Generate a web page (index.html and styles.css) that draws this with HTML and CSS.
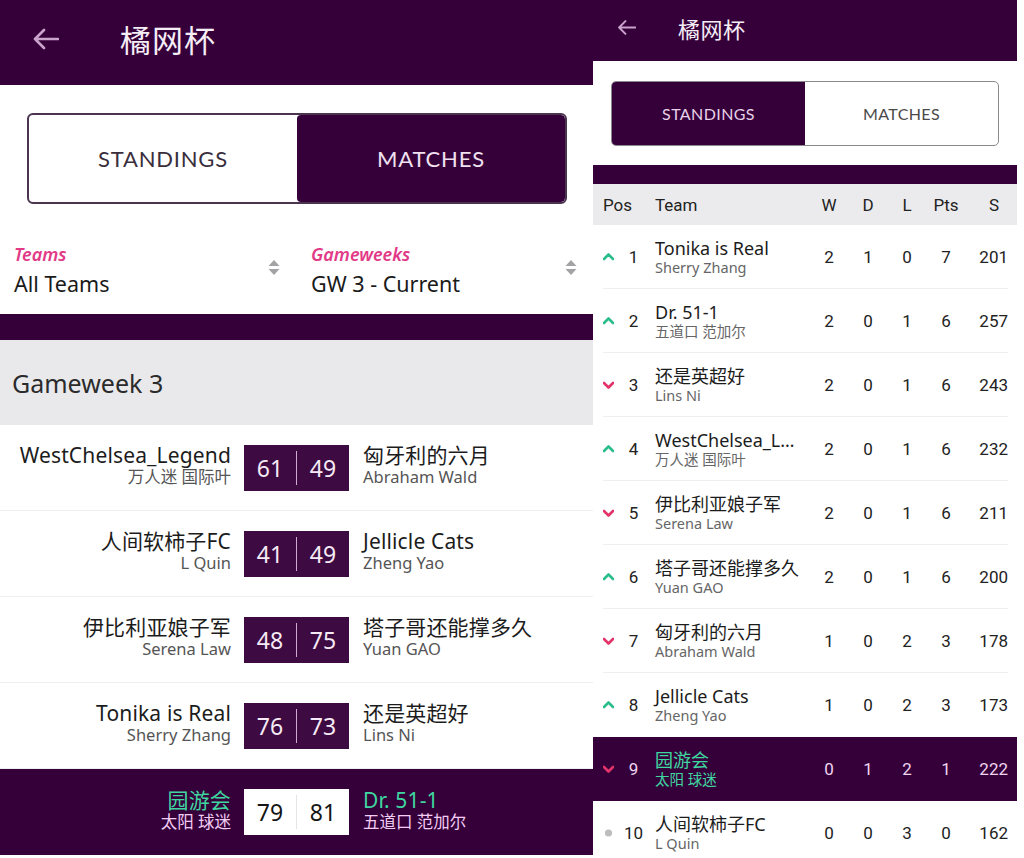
FILE: index.html
```html
<!DOCTYPE html>
<html lang="zh">
<head>
<meta charset="utf-8">
<title>橘网杯</title>
<link rel="stylesheet" href="styles.css">
</head>
<body>
<div class="page">
  <!-- LEFT SCREEN: MATCHES -->
  <section class="screen screen-left">
    <header class="appbar appbar-lg">
      <svg class="back" viewBox="0 0 27 24" width="27" height="24"><path d="M26 12H3 M12 3 3 12l9 9" fill="none" stroke="currentColor" stroke-width="2.6" stroke-linecap="round" stroke-linejoin="round"/></svg>
      <h1 class="title">橘网杯</h1>
    </header>
    <div class="tabs-wrap tabs-wrap-lg">
      <div class="tabs tabs-lg">
        <div class="tab">STANDINGS</div>
        <div class="tab tab-active">MATCHES</div>
      </div>
    </div>
    <div class="filters">
      <div class="filter">
        <div class="filter-text">
          <div class="filter-label">Teams</div>
          <div class="filter-value">All Teams</div>
        </div>
        <svg class="sort" viewBox="0 0 12 19" width="12" height="19"><polygon points="0.5,8 6,2 11.5,8" fill="currentColor"/><polygon points="0.5,11 6,17 11.5,11" fill="currentColor"/></svg>
      </div>
      <div class="filter">
        <div class="filter-text">
          <div class="filter-label">Gameweeks</div>
          <div class="filter-value">GW 3 - Current</div>
        </div>
        <svg class="sort" viewBox="0 0 12 19" width="12" height="19"><polygon points="0.5,8 6,2 11.5,8" fill="currentColor"/><polygon points="0.5,11 6,17 11.5,11" fill="currentColor"/></svg>
      </div>
    </div>
    <div class="stripe stripe-lg"></div>
    <div class="gw-head">Gameweek 3</div>

    <div class="match">
      <div class="side side-home"><div class="team">WestChelsea_Legend</div><div class="manager">万人迷 国际叶</div></div>
      <div class="score"><span>61</span><span>49</span></div>
      <div class="side side-away"><div class="team">匈牙利的六月</div><div class="manager">Abraham Wald</div></div>
    </div>
    <div class="match">
      <div class="side side-home"><div class="team">人间软柿子FC</div><div class="manager">L Quin</div></div>
      <div class="score"><span>41</span><span>49</span></div>
      <div class="side side-away"><div class="team">Jellicle Cats</div><div class="manager">Zheng Yao</div></div>
    </div>
    <div class="match">
      <div class="side side-home"><div class="team">伊比利亚娘子军</div><div class="manager">Serena Law</div></div>
      <div class="score"><span>48</span><span>75</span></div>
      <div class="side side-away"><div class="team">塔子哥还能撑多久</div><div class="manager">Yuan GAO</div></div>
    </div>
    <div class="match">
      <div class="side side-home"><div class="team">Tonika is Real</div><div class="manager">Sherry Zhang</div></div>
      <div class="score"><span>76</span><span>73</span></div>
      <div class="side side-away"><div class="team">还是英超好</div><div class="manager">Lins Ni</div></div>
    </div>
    <div class="match match-mine">
      <div class="side side-home"><div class="team">园游会</div><div class="manager">太阳 球迷</div></div>
      <div class="score"><span>79</span><span>81</span></div>
      <div class="side side-away"><div class="team">Dr. 51-1</div><div class="manager">五道口 范加尔</div></div>
    </div>
  </section>

  <!-- RIGHT SCREEN: STANDINGS -->
  <section class="screen screen-right">
    <header class="appbar appbar-sm">
      <svg class="back back-sm" viewBox="0 0 27 24" width="19" height="17"><path d="M26 12H3 M12 3 3 12l9 9" fill="none" stroke="currentColor" stroke-width="2.8" stroke-linecap="round" stroke-linejoin="round"/></svg>
      <h1 class="title title-sm">橘网杯</h1>
    </header>
    <div class="tabs-wrap tabs-wrap-sm">
      <div class="tabs tabs-sm">
        <div class="tab tab-active">STANDINGS</div>
        <div class="tab">MATCHES</div>
      </div>
    </div>
    <div class="stripe stripe-sm"></div>
    <div class="thead">
      <div class="c-pos-h">Pos</div>
      <div class="c-team">Team</div>
      <div class="c-num">W</div>
      <div class="c-num">D</div>
      <div class="c-num">L</div>
      <div class="c-num">Pts</div>
      <div class="c-s c-s-h">S</div>
    </div>

    <div class="trow"><div class="trow-in">
      <svg class="mv" viewBox="0 0 11 10" width="11" height="10"><polyline class="up" points="1,7 5.5,2.5 10,7"/></svg>
      <div class="c-pos">1</div>
      <div class="c-team"><div class="t-name">Tonika is Real</div><div class="t-mgr">Sherry Zhang</div></div>
      <div class="c-num">2</div><div class="c-num">1</div><div class="c-num">0</div><div class="c-num">7</div><div class="c-s">201</div>
    </div></div>
    <div class="trow"><div class="trow-in">
      <svg class="mv" viewBox="0 0 11 10" width="11" height="10"><polyline class="up" points="1,7 5.5,2.5 10,7"/></svg>
      <div class="c-pos">2</div>
      <div class="c-team"><div class="t-name">Dr. 51-1</div><div class="t-mgr">五道口 范加尔</div></div>
      <div class="c-num">2</div><div class="c-num">0</div><div class="c-num">1</div><div class="c-num">6</div><div class="c-s">257</div>
    </div></div>
    <div class="trow"><div class="trow-in">
      <svg class="mv" viewBox="0 0 11 10" width="11" height="10"><polyline class="down" points="1,3 5.5,7.5 10,3"/></svg>
      <div class="c-pos">3</div>
      <div class="c-team"><div class="t-name">还是英超好</div><div class="t-mgr">Lins Ni</div></div>
      <div class="c-num">2</div><div class="c-num">0</div><div class="c-num">1</div><div class="c-num">6</div><div class="c-s">243</div>
    </div></div>
    <div class="trow"><div class="trow-in">
      <svg class="mv" viewBox="0 0 11 10" width="11" height="10"><polyline class="up" points="1,7 5.5,2.5 10,7"/></svg>
      <div class="c-pos">4</div>
      <div class="c-team"><div class="t-name">WestChelsea_L…</div><div class="t-mgr">万人迷 国际叶</div></div>
      <div class="c-num">2</div><div class="c-num">0</div><div class="c-num">1</div><div class="c-num">6</div><div class="c-s">232</div>
    </div></div>
    <div class="trow"><div class="trow-in">
      <svg class="mv" viewBox="0 0 11 10" width="11" height="10"><polyline class="down" points="1,3 5.5,7.5 10,3"/></svg>
      <div class="c-pos">5</div>
      <div class="c-team"><div class="t-name">伊比利亚娘子军</div><div class="t-mgr">Serena Law</div></div>
      <div class="c-num">2</div><div class="c-num">0</div><div class="c-num">1</div><div class="c-num">6</div><div class="c-s">211</div>
    </div></div>
    <div class="trow"><div class="trow-in">
      <svg class="mv" viewBox="0 0 11 10" width="11" height="10"><polyline class="up" points="1,7 5.5,2.5 10,7"/></svg>
      <div class="c-pos">6</div>
      <div class="c-team"><div class="t-name">塔子哥还能撑多久</div><div class="t-mgr">Yuan GAO</div></div>
      <div class="c-num">2</div><div class="c-num">0</div><div class="c-num">1</div><div class="c-num">6</div><div class="c-s">200</div>
    </div></div>
    <div class="trow"><div class="trow-in">
      <svg class="mv" viewBox="0 0 11 10" width="11" height="10"><polyline class="down" points="1,3 5.5,7.5 10,3"/></svg>
      <div class="c-pos">7</div>
      <div class="c-team"><div class="t-name">匈牙利的六月</div><div class="t-mgr">Abraham Wald</div></div>
      <div class="c-num">1</div><div class="c-num">0</div><div class="c-num">2</div><div class="c-num">3</div><div class="c-s">178</div>
    </div></div>
    <div class="trow"><div class="trow-in trow-last">
      <svg class="mv" viewBox="0 0 11 10" width="11" height="10"><polyline class="up" points="1,7 5.5,2.5 10,7"/></svg>
      <div class="c-pos">8</div>
      <div class="c-team"><div class="t-name">Jellicle Cats</div><div class="t-mgr">Zheng Yao</div></div>
      <div class="c-num">1</div><div class="c-num">0</div><div class="c-num">2</div><div class="c-num">3</div><div class="c-s">173</div>
    </div></div>
    <div class="trow trow-mine"><div class="trow-in">
      <svg class="mv" viewBox="0 0 11 10" width="11" height="10"><polyline class="down" points="1,3 5.5,7.5 10,3"/></svg>
      <div class="c-pos">9</div>
      <div class="c-team"><div class="t-name">园游会</div><div class="t-mgr">太阳 球迷</div></div>
      <div class="c-num">0</div><div class="c-num">1</div><div class="c-num">2</div><div class="c-num">1</div><div class="c-s">222</div>
    </div></div>
    <div class="trow"><div class="trow-in">
      <svg class="mv" viewBox="0 0 11 10" width="11" height="10"><circle cx="5.5" cy="5" r="3.6" fill="#bdbdbd"/></svg>
      <div class="c-pos">10</div>
      <div class="c-team"><div class="t-name">人间软柿子FC</div><div class="t-mgr">L Quin</div></div>
      <div class="c-num">0</div><div class="c-num">0</div><div class="c-num">3</div><div class="c-num">0</div><div class="c-s">162</div>
    </div></div>
  </section>
</div>
</body>
</html>
```

FILE: styles.css
```css
* { box-sizing: border-box; }
html, body { margin: 0; padding: 0; background: #ffffff; }
body {
  font-family: "Noto Sans", "Noto Sans CJK SC", sans-serif;
  color: #1f1f1f;
}
.page {
  width: 1024px;
  height: 858px;
  display: flex;
  overflow: hidden;
  background: #ffffff;
}
.screen {
  height: 858px;
  overflow: hidden;
  background: #ffffff;
  flex: none;
}
.screen-left { width: 593px; }
.screen-right { width: 424px; }

/* App bar */
.appbar {
  background: #35003a;
  display: flex;
  align-items: center;
  color: #f4ecf4;
}
.appbar-lg { height: 85px; padding: 0 0 8px 32px; gap: 61px; }
.appbar-sm { height: 61px; padding: 0 0 6px 24px; gap: 42px; }
.back { color: #c9a3cb; flex: none; display: block; }
.title {
  margin: 0;
  font-family: "Noto Sans CJK SC", sans-serif;
  font-weight: 400;
  font-size: 31px;
  line-height: 36px;
  color: #f6eef6;
  letter-spacing: 1px;
}
.title-sm { font-size: 22px; line-height: 28px; letter-spacing: 0.5px; }

/* Tabs */
.tabs-wrap-lg { padding: 28px 26px 0 27px; }
.tabs-wrap-sm { padding: 20px 18px 19px 18px; }
.tabs {
  display: flex;
  border: 2px solid #4a3450;
  border-radius: 6px;
  overflow: hidden;
  background: #ffffff;
}
.tabs-lg { height: 91px; }
.tabs-sm { height: 65px; border: 1.5px solid #8a8a8e; border-radius: 5px; }
.tab {
  flex: 1;
  display: flex;
  align-items: center;
  justify-content: center;
  font-family: "Lato", sans-serif;
  color: #3a2e3c;
  letter-spacing: 0.8px;
}
.tabs-lg .tab { font-size: 22px; }
.tabs-sm .tab { font-size: 16px; color: #4a4a4a; letter-spacing: 0.4px; }
.tab-active { background: #35003a; color: #efdcef; }
.tabs-sm .tab-active { color: #e8d2e8; }
.tabs-lg .tab-active { color: #f0e0f0; border-radius: 4px; }

/* Filters */
.filters {
  height: 110px;
  display: grid;
  grid-template-columns: 1fr 1fr;
  column-gap: 29px;
  padding: 36px 14px 0 14px;
}
.filter {
  display: flex;
  align-items: center;
  justify-content: space-between;
  height: 60px;
}
.filter-label {
  font-style: italic;
  font-weight: 600;
  font-size: 18px;
  line-height: 25px;
  color: #e23a87;
}
.filter-value {
  font-size: 21.5px;
  line-height: 29px;
  margin-top: 2px;
  color: #1a1a1a;
}
.sort { color: #a3a3a6; margin-right: 2px; margin-bottom: 6px; display: block; }

.stripe { background: #35003a; }
.stripe-lg { height: 26px; }
.stripe-sm { height: 19px; }

.gw-head {
  height: 85px;
  background: #e9e9eb;
  display: flex;
  align-items: center;
  padding-left: 12px;
  font-size: 25px;
  color: #2b2b2b;
}

/* Match rows */
.match {
  height: 86px;
  display: grid;
  grid-template-columns: 1fr 105px 1fr;
  column-gap: 13px;
  align-items: center;
  border-bottom: 1.5px solid #efeff1;
}
.side { padding-bottom: 4px; }
.side-home { text-align: right; }
.side-away { text-align: left; padding-left: 1px; }
.team { font-size: 21px; line-height: 23px; letter-spacing: 0.15px; color: #1c1c1c; white-space: nowrap; }
.manager { font-size: 16.5px; line-height: 20px; color: #555; white-space: nowrap; }
.score {
  height: 46px;
  background: #3d0a41;
  display: flex;
  align-items: center;
  color: #f6eaf6;
  font-size: 23px;
}
.score span {
  flex: 1;
  text-align: center;
  line-height: 34px;
}
.score span:first-child { border-right: 1.5px solid #cfa9d1; }
.match-mine { background: #35003a; border-bottom: none; }
.match-mine .team { color: #3fd7a0; }
.match-mine .manager { color: #f3cdf3; }
.match-mine .score { background: #ffffff; color: #151515; }
.match-mine .score span:first-child { border-right-color: #e4e4e4; }

/* Standings table */
.thead, .trow-in {
  display: grid;
  grid-template-columns: 10px 41px 1fr 39px 39px 39px 39px 42.5px;
  align-items: center;
}
.thead {
  height: 41px;
  background: #ebebed;
  padding: 0 9px 0 10px;
  font-family: "Roboto", sans-serif;
  font-size: 17px;
  color: #222;
}
.c-pos-h { grid-column: 1 / 3; }
.c-team { min-width: 0; padding-left: 1px; }
.c-num { text-align: center; }
.c-s { text-align: right; }
.c-s-h { padding-right: 9px; }

.trow { height: 64px; padding: 0 9px 0 10px; }
.trow-in { height: 64px; border-bottom: 1.5px solid #efeff1; }
.trow-last { border-bottom: none; }
.trow .c-num, .trow .c-s, .c-pos {
  font-family: "Roboto", sans-serif;
  font-size: 17px;
  color: #222;
}
.c-pos { text-align: center; }
.mv { display: block; }
.mv .up { fill: none; stroke: #2bbd8c; stroke-width: 2.6; stroke-linecap: round; stroke-linejoin: round; }
.mv .down { fill: none; stroke: #e2336a; stroke-width: 2.6; stroke-linecap: round; stroke-linejoin: round; }
.t-name {
  font-size: 18px;
  line-height: 20px;
  color: #1c1c1c;
  white-space: nowrap;
}
.t-mgr {
  font-size: 14.5px;
  line-height: 18px;
  color: #666;
  white-space: nowrap;
}
.trow-mine { background: #35003a; }
.trow-mine .trow-in { border-bottom: none; }
.trow-mine .t-name, .trow-mine .t-mgr { color: #3fd7a0; }
.trow-mine .c-num, .trow-mine .c-s, .trow-mine .c-pos { color: #f0d4f0; }
```
